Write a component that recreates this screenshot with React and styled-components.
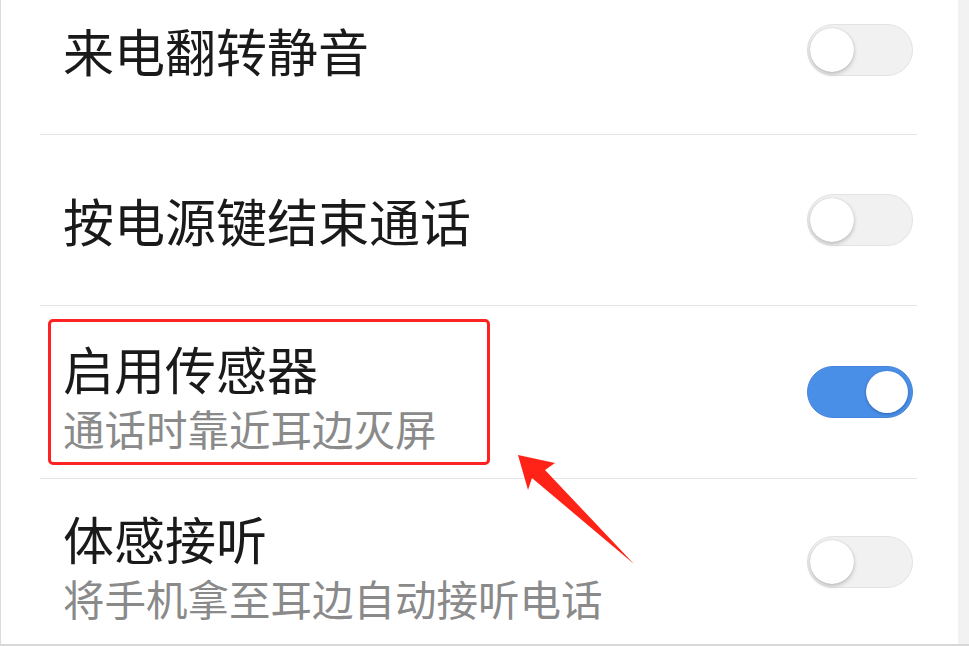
import React from 'react';
import styled, { createGlobalStyle } from 'styled-components';

const GlobalStyle = createGlobalStyle`
  html, body {
    margin: 0;
    padding: 0;
    background: #ffffff;
  }
  body {
    font-family: "Noto Sans CJK SC", "Noto Sans", sans-serif;
  }
`;

const Page = styled.div`
  position: relative;
  width: 969px;
  height: 646px;
  overflow: hidden;
  display: flex;
  box-sizing: border-box;
  border-left: 1px solid #dcdcdc;
  border-bottom: 2px solid #d8d8d8;
  background: #ffffff;
`;

const List = styled.div`
  flex: 1;
  display: flex;
  flex-direction: column;
  padding-left: 39px;
  padding-right: 41px;
`;

const Edge = styled.div`
  width: 11px;
  background: #f2f2f2;
`;

const Row = styled.div`
  display: flex;
  align-items: center;
  justify-content: space-between;
  box-sizing: border-box;
  height: ${(p) => p.h}px;
  padding: ${(p) => p.pad || '0'};
  padding-left: 23px;
  padding-right: 4px;
  border-bottom: ${(p) => (p.last ? 'none' : '1.5px solid #e4e4e4')};
`;

const TextBlock = styled.div`
  position: relative;
  display: flex;
  flex-direction: column;
  margin-top: ${(p) => p.dy || 0}px;
  ${(p) =>
    p.marked &&
    `
    &::after {
      content: '';
      position: absolute;
      left: -15px;
      top: -19px;
      width: 436px;
      height: 140px;
      border: 3px solid #ff2222;
      border-radius: 5px;
    }
  `}
`;

const Title = styled.div`
  font-size: 51px;
  line-height: 60px;
  color: #1a1a1a;
  white-space: nowrap;
`;

const Sub = styled.div`
  font-size: 41.5px;
  line-height: 60px;
  color: #8a8a8a;
  white-space: nowrap;
`;

const Track = styled.div`
  position: relative;
  width: 106px;
  height: 52px;
  box-sizing: border-box;
  border-radius: 26px;
  margin-top: ${(p) => p.dy || 0}px;
  background: ${(p) => (p.on ? '#4a8fe7' : '#f1f1f1')};
  border: 1px solid ${(p) => (p.on ? '#4585dc' : '#e3e3e3')};
`;

const Knob = styled.div`
  position: absolute;
  top: 50%;
  transform: translateY(-50%);
  width: ${(p) => (p.on ? 42 : 44)}px;
  height: ${(p) => (p.on ? 42 : 44)}px;
  border-radius: 50%;
  background: #ffffff;
  ${(p) => (p.on ? 'right: 4px;' : 'left: 2px;')}
  box-shadow: ${(p) =>
    p.on
      ? '0 1px 3px rgba(20, 60, 140, 0.55)'
      : '0 2px 4px rgba(0, 0, 0, 0.22), 0 0 1px rgba(0, 0, 0, 0.2)'};
`;

const Arrow = styled.svg`
  position: absolute;
  left: 0;
  top: 0;
  pointer-events: none;
`;

const Toggle = ({ on, dy }) => (
  <Track on={on} dy={dy}>
    <Knob on={on} />
  </Track>
);

const App = () => (
  <>
    <GlobalStyle />
    <Page>
      <List>
        <Row h={135} pad="0 0 34px 0">
          <TextBlock>
            <Title>来电翻转静音</Title>
          </TextBlock>
          <Toggle dy={-1} />
        </Row>
        <Row h={171}>
          <TextBlock>
            <Title>按电源键结束通话</Title>
          </TextBlock>
          <Toggle />
        </Row>
        <Row h={173}>
          <TextBlock marked dy={12}>
            <Title>启用传感器</Title>
            <Sub>通话时靠近耳边灭屏</Sub>
          </TextBlock>
          <Toggle on />
        </Row>
        <Row h={165} last>
          <TextBlock dy={12}>
            <Title>体感接听</Title>
            <Sub>将手机拿至耳边自动接听电话</Sub>
          </TextBlock>
          <Toggle />
        </Row>
      </List>
      <Edge />
      <Arrow width="969" height="646" viewBox="0 0 969 646">
        <polygon
          points="517,455 554,463 544,470 633,564 531,478 527,490"
          fill="#ff2216"
        />
      </Arrow>
    </Page>
  </>
);

export default App;
